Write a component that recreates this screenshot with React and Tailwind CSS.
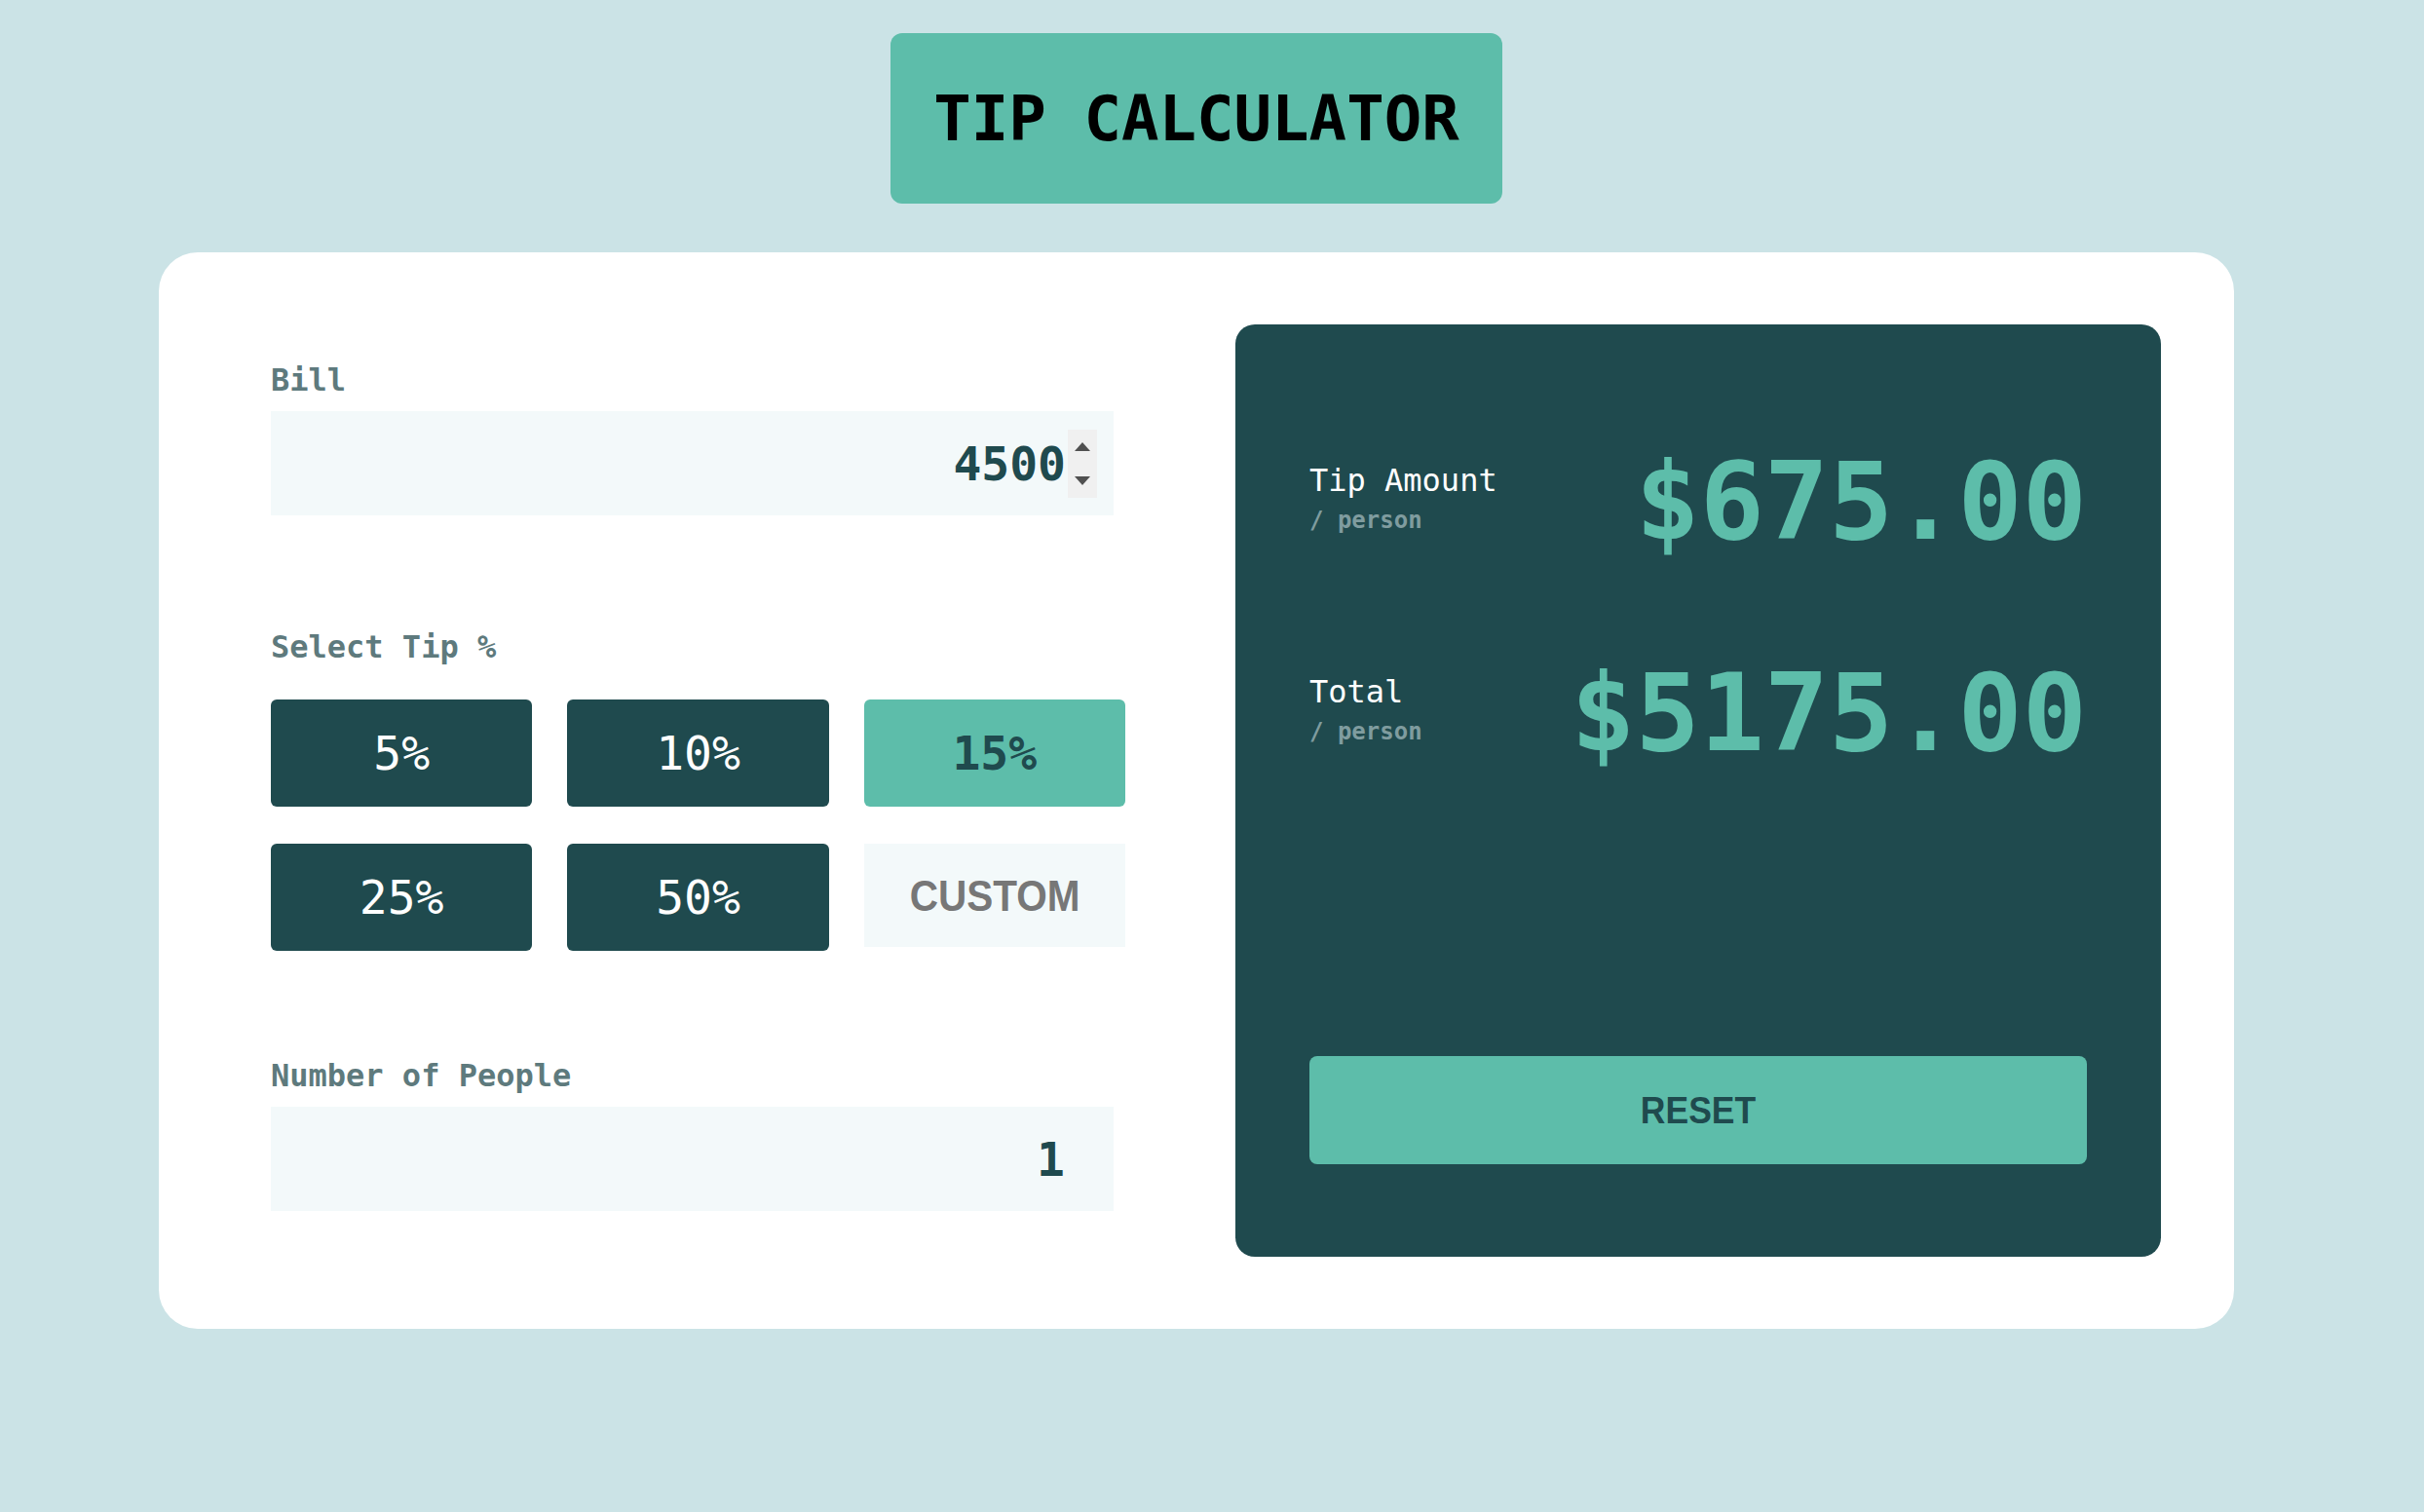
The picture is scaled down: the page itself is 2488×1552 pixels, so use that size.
const tips = [
  { label: "5%" },
  { label: "10%" },
  { label: "15%", active: true },
  { label: "25%" },
  { label: "50%" },
];

const Label = ({ children, className = "" }) => (
  <p className={`text-[32px] leading-none font-bold text-[#5e7a7d] ${className}`}>{children}</p>
);

const Spinner = () => (
  <div className="ml-[2px] w-[30px] h-[70px] bg-[#f0f0f0] flex flex-col items-center justify-between py-[13px]">
    <div className="w-0 h-0 border-x-[8px] border-x-transparent border-b-[9px] border-b-[#505050]" />
    <div className="w-0 h-0 border-x-[8px] border-x-transparent border-t-[9px] border-t-[#505050]" />
  </div>
);

const ResultRow = ({ title, value, className = "" }) => (
  <div className={`flex items-start justify-between ${className}`}>
    <div className="flex flex-col pt-[16px]">
      <span className="text-[32px] leading-none text-white">{title}</span>
      <span className="mt-[13px] text-[24px] leading-none font-bold text-[#7f9c9f]">/ person</span>
    </div>
    <span className="-mt-[1px] text-[110px] leading-none font-bold text-[#5dbdaa]">{value}</span>
  </div>
);

export default function App() {
  return (
    <div className="min-h-screen bg-[#cbe3e6] flex flex-col items-center pr-[32px] pt-[34px] font-['DejaVu_Sans_Mono',monospace]">
      <h1 className="w-[628px] h-[175px] bg-[#5dbdaa] rounded-[12px] flex items-center justify-center text-[64px] leading-none font-bold text-black">
        TIP CALCULATOR
      </h1>

      <div className="mt-[50px] w-[2130px] h-[1105px] bg-white rounded-[40px] flex gap-[113px] pt-[74px] pb-[74px] pl-[115px] pr-[75px]">
        {/* inputs */}
        <div className="w-[877px] flex flex-col pt-[41px]">
          <Label>Bill</Label>
          <div className="mt-[16px] w-[865px] h-[107px] bg-[#f3f9fa] flex items-center justify-end pr-[17px]">
            <span className="text-[48px] leading-none font-bold text-[#1f4a4e]">4500</span>
            <Spinner />
          </div>

          <Label className="mt-[119px]">Select Tip %</Label>
          <div className="mt-[38px] grid grid-cols-3 gap-x-[36px] gap-y-[38px]">
            {tips.map((t) => (
              <button
                key={t.label}
                className={`h-[110px] rounded-[6px] flex items-center justify-center text-[48px] leading-none ${
                  t.active ? "bg-[#5dbdaa] text-[#1f4a4e] font-bold" : "bg-[#1f4a4e] text-white"
                }`}
              >
                {t.label}
              </button>
            ))}
            <div className="h-[106px] bg-[#f3f9fa] flex items-center justify-center">
              <span className="inline-block scale-x-[0.9] font-['Liberation_Sans',Arial,sans-serif] text-[45px] leading-none font-bold text-[#777777]">
                CUSTOM
              </span>
            </div>
          </div>

          <Label className="mt-[112px]">Number of People</Label>
          <div className="mt-[16px] w-[865px] h-[107px] bg-[#f3f9fa] flex items-center justify-end pr-[50px]">
            <span className="text-[48px] leading-none font-bold text-[#1f4a4e]">1</span>
          </div>
        </div>

        {/* results */}
        <div className="w-[950px] bg-[#1f4a4e] rounded-[20px] flex flex-col pt-[128px] pb-[95px] px-[76px]">
          <ResultRow title="Tip Amount" value="$675.00" />
          <ResultRow title="Total" value="$5175.00" className="mt-[108px]" />
          <button className="mt-auto h-[111px] rounded-[8px] bg-[#5dbdaa] flex items-center justify-center">
            <span className="inline-block scale-x-[0.91] font-['Liberation_Sans',Arial,sans-serif] text-[39px] leading-none font-bold text-[#1f4a4e]">
              RESET
            </span>
          </button>
        </div>
      </div>
    </div>
  );
}
